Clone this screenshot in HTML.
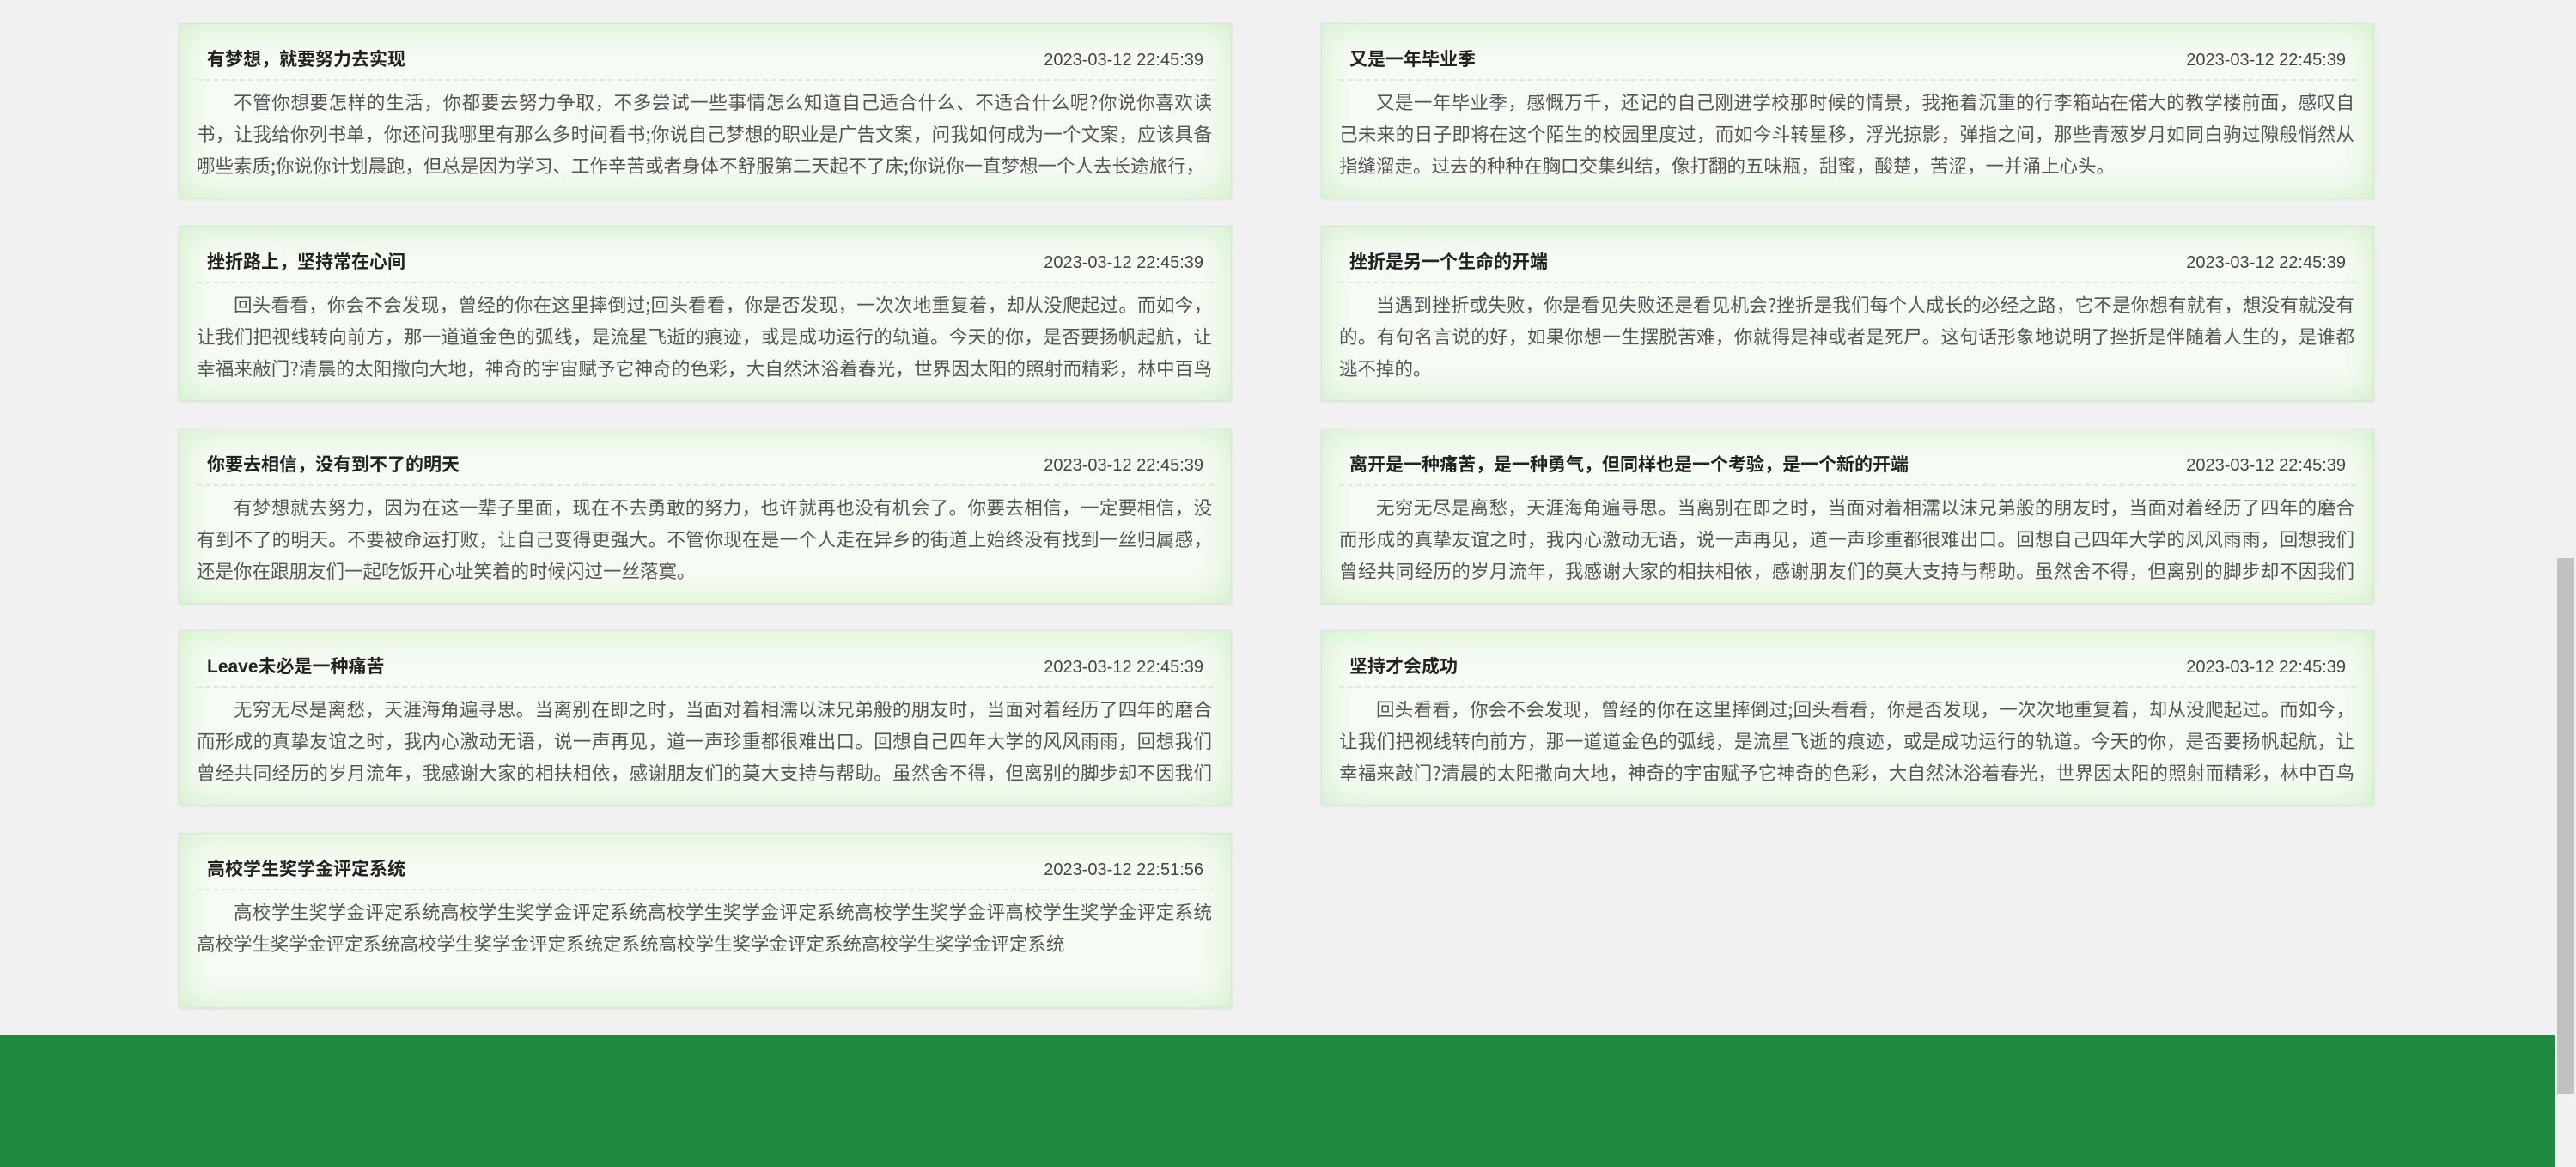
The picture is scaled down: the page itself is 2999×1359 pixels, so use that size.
<!DOCTYPE html>
<html><head><meta charset="utf-8">
<style>
*{margin:0;padding:0;box-sizing:border-box}
body{width:2999px;height:1359px;overflow:hidden;background:#f1f1f1;font-family:"Liberation Sans","Noto Sans CJK SC",sans-serif;position:relative}
.card{position:absolute;width:1226px;height:204px;border:1px solid #d3ecd0;background:#f6fbf4;box-shadow:inset 0 0 40px #cdeec6, 0 1px 3px rgba(0,0,0,.08);overflow:hidden}
.card .hd{position:absolute;left:32px;right:32px;top:22px;height:40px;font-size:21px;font-weight:bold;color:#222;line-height:40px}
.card .hd span{position:absolute;right:0;top:0;font-weight:normal;color:#444;font-size:20px}
.card .ln{position:absolute;left:20px;right:20px;top:64px;border-top:2px dashed #dfe8dc}
.card .bd{position:absolute;left:20px;right:22px;top:72px;height:112px;overflow:hidden;font-size:21.5px;line-height:37px;color:#555;text-indent:2em;text-align:justify;font-family:"Noto Sans CJK SC",sans-serif}
.L{left:208px}.R{left:1538px}
.footer{position:absolute;left:0;top:1205px;width:2975px;height:154px;background:#1f8a3f}
.sb{position:absolute;left:2975px;top:0;width:24px;height:1359px;background:#f1f1f1}
.sb i{position:absolute;left:2px;right:2px;top:650px;height:624px;background:#c1c1c1}
</style></head><body>

<div class="card L" style="top:27px"><div class="hd">有梦想，就要努力去实现<span>2023-03-12 22:45:39</span></div><div class="ln"></div><div class="bd">不管你想要怎样的生活，你都要去努力争取，不多尝试一些事情怎么知道自己适合什么、不适合什么呢?你说你喜欢读书，让我给你列书单，你还问我哪里有那么多时间看书;你说自己梦想的职业是广告文案，问我如何成为一个文案，应该具备哪些素质;你说你计划晨跑，但总是因为学习、工作辛苦或者身体不舒服第二天起不了床;你说你一直梦想一个人去长途旅行，</div></div>

<div class="card R" style="top:27px"><div class="hd">又是一年毕业季<span>2023-03-12 22:45:39</span></div><div class="ln"></div><div class="bd">又是一年毕业季，感慨万千，还记的自己刚进学校那时候的情景，我拖着沉重的行李箱站在偌大的教学楼前面，感叹自己未来的日子即将在这个陌生的校园里度过，而如今斗转星移，浮光掠影，弹指之间，那些青葱岁月如同白驹过隙般悄然从指缝溜走。过去的种种在胸口交集纠结，像打翻的五味瓶，甜蜜，酸楚，苦涩，一并涌上心头。</div></div>

<div class="card L" style="top:263px"><div class="hd">挫折路上，坚持常在心间<span>2023-03-12 22:45:39</span></div><div class="ln"></div><div class="bd">回头看看，你会不会发现，曾经的你在这里摔倒过;回头看看，你是否发现，一次次地重复着，却从没爬起过。而如今，让我们把视线转向前方，那一道道金色的弧线，是流星飞逝的痕迹，或是成功运行的轨道。今天的你，是否要扬帆起航，让幸福来敲门?清晨的太阳撒向大地，神奇的宇宙赋予它神奇的色彩，大自然沐浴着春光，世界因太阳的照射而精彩，林中百鸟齐鸣</div></div>

<div class="card R" style="top:263px"><div class="hd">挫折是另一个生命的开端<span>2023-03-12 22:45:39</span></div><div class="ln"></div><div class="bd">当遇到挫折或失败，你是看见失败还是看见机会?挫折是我们每个人成长的必经之路，它不是你想有就有，想没有就没有的。有句名言说的好，如果你想一生摆脱苦难，你就得是神或者是死尸。这句话形象地说明了挫折是伴随着人生的，是谁都逃不掉的。</div></div>

<div class="card L" style="top:499px"><div class="hd">你要去相信，没有到不了的明天<span>2023-03-12 22:45:39</span></div><div class="ln"></div><div class="bd">有梦想就去努力，因为在这一辈子里面，现在不去勇敢的努力，也许就再也没有机会了。你要去相信，一定要相信，没有到不了的明天。不要被命运打败，让自己变得更强大。不管你现在是一个人走在异乡的街道上始终没有找到一丝归属感，还是你在跟朋友们一起吃饭开心址笑着的时候闪过一丝落寞。</div></div>

<div class="card R" style="top:499px"><div class="hd">离开是一种痛苦，是一种勇气，但同样也是一个考验，是一个新的开端<span>2023-03-12 22:45:39</span></div><div class="ln"></div><div class="bd">无穷无尽是离愁，天涯海角遍寻思。当离别在即之时，当面对着相濡以沫兄弟般的朋友时，当面对着经历了四年的磨合而形成的真挚友谊之时，我内心激动无语，说一声再见，道一声珍重都很难出口。回想自己四年大学的风风雨雨，回想我们曾经共同经历的岁月流年，我感谢大家的相扶相依，感谢朋友们的莫大支持与帮助。虽然舍不得，但离别的脚步却不因我们而停留</div></div>

<div class="card L" style="top:734px"><div class="hd">Leave未必是一种痛苦<span>2023-03-12 22:45:39</span></div><div class="ln"></div><div class="bd">无穷无尽是离愁，天涯海角遍寻思。当离别在即之时，当面对着相濡以沫兄弟般的朋友时，当面对着经历了四年的磨合而形成的真挚友谊之时，我内心激动无语，说一声再见，道一声珍重都很难出口。回想自己四年大学的风风雨雨，回想我们曾经共同经历的岁月流年，我感谢大家的相扶相依，感谢朋友们的莫大支持与帮助。虽然舍不得，但离别的脚步却不因我们而停留</div></div>

<div class="card R" style="top:734px"><div class="hd">坚持才会成功<span>2023-03-12 22:45:39</span></div><div class="ln"></div><div class="bd">回头看看，你会不会发现，曾经的你在这里摔倒过;回头看看，你是否发现，一次次地重复着，却从没爬起过。而如今，让我们把视线转向前方，那一道道金色的弧线，是流星飞逝的痕迹，或是成功运行的轨道。今天的你，是否要扬帆起航，让幸福来敲门?清晨的太阳撒向大地，神奇的宇宙赋予它神奇的色彩，大自然沐浴着春光，世界因太阳的照射而精彩，林中百鸟齐鸣</div></div>

<div class="card L" style="top:970px"><div class="hd">高校学生奖学金评定系统<span>2023-03-12 22:51:56</span></div><div class="ln"></div><div class="bd">高校学生奖学金评定系统高校学生奖学金评定系统高校学生奖学金评定系统高校学生奖学金评高校学生奖学金评定系统高校学生奖学金评定系统高校学生奖学金评定系统定系统高校学生奖学金评定系统高校学生奖学金评定系统</div></div>

<div class="footer"></div>
<div class="sb"><i></i></div>
</body></html>
